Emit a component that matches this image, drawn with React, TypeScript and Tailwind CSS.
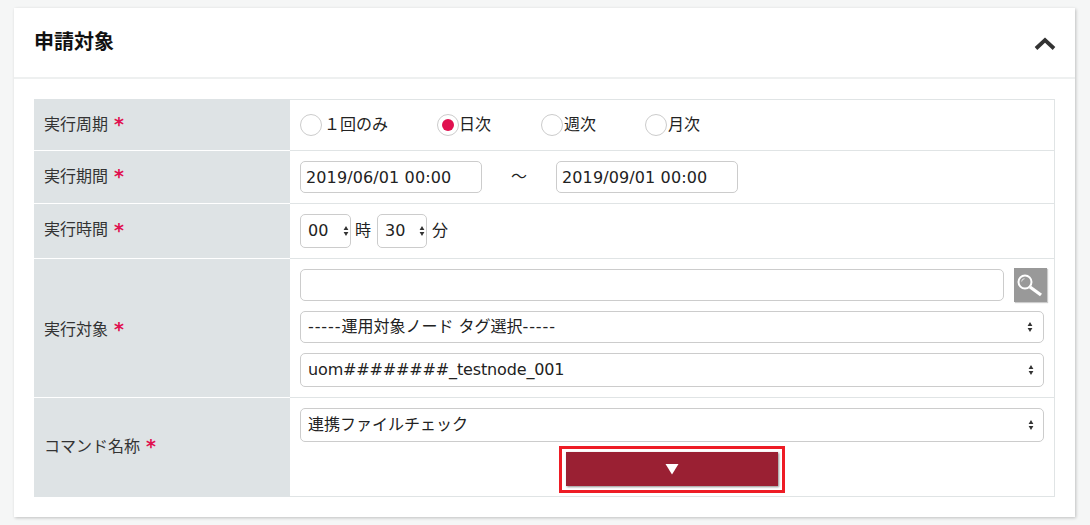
import React from "react";

const FONT = "font-['DejaVu_Sans','Noto_Sans_CJK_JP',sans-serif]";

function Label({ text, className }: { text: string; className: string }) {
  return (
    <div className={`w-[256px] shrink-0 bg-[#dee3e5] border-b border-white flex items-center pl-[10px] text-[16px] text-[#333] ${className}`}>
      <span>{text}</span>
      <span className="ml-[6px] text-[#e0104f] text-[19px] leading-none font-bold">*</span>
    </div>
  );
}

function Arrows({ right }: { right: string }) {
  return (
    <svg width="6" height="12" viewBox="0 0 6 12" className={`absolute ${right} top-1/2 -translate-y-1/2 pointer-events-none`}>
      <path d="M3 1 L5.4 5 H0.6 Z M3 11 L5.4 7 H0.6 Z" fill="#333" />
    </svg>
  );
}

function Select({ value, className, right = "right-[10px]", text = "" }: { value: string; className: string; right?: string; text?: string }) {
  return (
    <div className={`relative ${className}`}>
      <select defaultValue={value} className={`${FONT} appearance-none w-full h-full bg-white border border-[#ccc] rounded-[5px] pl-[7px] text-[16px] text-[#222] outline-none ${text}`}>
        <option>{value}</option>
      </select>
      <Arrows right={right} />
    </div>
  );
}

function Radio({ text, checked, width, gap = "" }: { text: string; checked?: boolean; width: string; gap?: string }) {
  return (
    <div className={`flex items-center ${width}`}>
      <span className="w-[22px] h-[22px] rounded-full border border-[#ccc] bg-white flex items-center justify-center shrink-0">
        {checked && <span className="w-[12px] h-[12px] rounded-full bg-[#e0104f]" />}
      </span>
      <span className={`text-[16px] text-[#222] ${gap}`}>{text}</span>
    </div>
  );
}

function DateInput({ value }: { value: string }) {
  return (
    <input readOnly value={value} className={`${FONT} w-[182px] h-[32px] border border-[#ccc] rounded-[5px] px-[5px] text-[16px] tracking-[0.12px] text-[#222] outline-none`} />
  );
}

export default function App() {
  return (
    <div className={`${FONT} w-[1090px] h-[525px] bg-[#f5f6f6] pt-[8px] pl-[14px] overflow-hidden`}>
      <div className="w-[1061px] h-[509px] bg-white shadow-[1px_1px_3px_rgba(0,0,0,0.22)]">
        <div className="h-[71px] border-b-2 border-[#eef0f0] flex items-center justify-between pl-[20px] pr-[19px]">
          <h2 className="text-[20px] font-bold text-[#111] -mt-[2px]">申請対象</h2>
          <svg width="22" height="14" viewBox="0 0 22 14" className="mt-[1px]">
            <path d="M2 12.5 L11 4 L20 12.5" fill="none" stroke="#333" strokeWidth="3.8" />
          </svg>
        </div>
        <div className="ml-[20px] mt-[20px] w-[1021px] border-r border-[#e0e4e5]">
          <div className="flex h-[52px]">
            <Label text="実行周期" className="" />
            <div className="flex-1 border-t border-b border-[#e0e4e5] flex items-center pl-[10px]">
              <Radio text="１回のみ" width="w-[137px]" gap="ml-[2px]" />
              <Radio text="日次" checked width="w-[104px]" />
              <Radio text="週次" width="w-[104px]" gap="ml-px" />
              <Radio text="月次" width="w-[104px]" gap="ml-px" />
            </div>
          </div>
          <div className="flex h-[53px]">
            <Label text="実行期間" className="pb-[1px]" />
            <div className="flex-1 border-b border-[#e0e4e5] flex items-center pl-[10px]">
              <DateInput value="2019/06/01 00:00" />
              <span className="w-[74px] text-center text-[16px] text-[#222]">～</span>
              <DateInput value="2019/09/01 00:00" />
            </div>
          </div>
          <div className="flex h-[55px]">
            <Label text="実行時間" className="pb-[2px]" />
            <div className="flex-1 border-b border-[#e0e4e5] flex items-center pl-[10px] text-[16px] text-[#222]">
              <Select value="00" className="w-[51px] h-[34px]" right="right-[2px]" />
              <span className="ml-[4px] mr-[6px]">時</span>
              <Select value="30" className="w-[50px] h-[34px]" right="right-[2px]" />
              <span className="ml-[5px]">分</span>
            </div>
          </div>
          <div className="flex h-[139px]">
            <Label text="実行対象" className="pt-[3px]" />
            <div className="flex-1 border-b border-[#e0e4e5] pl-[10px] pt-[10px]">
              <div className="flex items-center h-[32px]">
                <input className="w-[704px] h-[32px] border border-[#ccc] rounded-[5px] outline-none" />
                <div className="ml-[10px] w-[33px] h-[34px] bg-[#999] shadow-[1px_1px_1px_rgba(0,0,0,0.2)]">
                  <svg width="33" height="34" viewBox="0 0 33 34">
                    <circle cx="11" cy="14" r="6.5" fill="none" stroke="#fff" strokeWidth="2" />
                    <path d="M7.5 13.5 A4 4 0 0 1 10.5 10.5" fill="none" stroke="#ddd" strokeWidth="1.1" />
                    <path d="M16 19 L27 27" stroke="#fff" strokeWidth="3.4" />
                  </svg>
                </div>
              </div>
              <div className="relative w-[744px] h-[32px] mt-[10px] bg-white border border-[#ccc] rounded-[5px] pl-[7px] flex items-center text-[16px] text-[#222]">
                <span><span className="tracking-[0.9px]">-----</span>運用対象ノード タグ選択<span className="tracking-[0.9px]">-----</span></span>
                <Arrows right="right-[10px]" />
              </div>
              <Select value="uom########_testnode_001" className="w-[744px] h-[34px] mt-[10px]" text="tracking-[-0.15px]" />
            </div>
          </div>
          <div className="flex h-[99px]">
            <Label text="コマンド名称" className="border-b-0 pb-[2px]" />
            <div className="flex-1 border-b border-[#e0e4e5] pl-[10px] pt-[10px]">
              <Select value="連携ファイルチェック" className="w-[744px] h-[34px]" />
              <div className="mt-[4px] ml-[259px] w-[226px] h-[47px] border-[3px] border-[#ee1c25] pt-[3px] pl-[4px] bg-white">
                <button className="w-[212px] h-[34px] bg-[#9a2033] shadow-[1px_1px_2px_rgba(0,0,0,0.45)] flex items-center justify-center">
                  <svg width="14" height="12" viewBox="0 0 14 12"><path d="M0.5 1 H13.5 L7 11.5 Z" fill="#fff" /></svg>
                </button>
              </div>
            </div>
          </div>
        </div>
      </div>
    </div>
  );
}
